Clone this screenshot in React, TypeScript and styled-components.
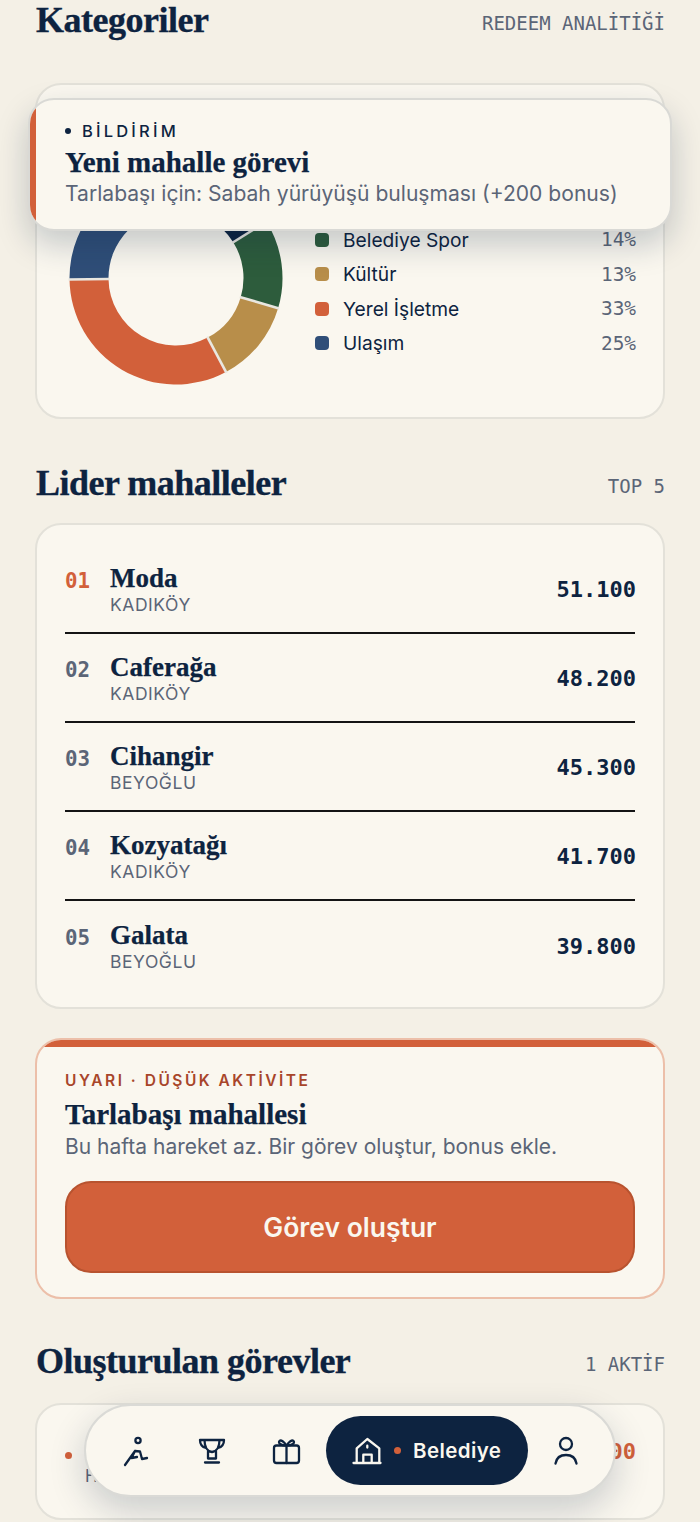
import React from "react";
import styled, { createGlobalStyle } from "styled-components";

const NAVY = "#0d2340";
const ORANGE = "#d2603a";
const MUTED = "#5b6577";
const CARD = "#faf7ef";
const SANS = `"Inter", "Liberation Sans", sans-serif`;
const SERIF = `"Liberation Serif", "DejaVu Serif", serif`;
const MONO = `"DejaVu Sans Mono", "Liberation Mono", monospace`;

const Global = createGlobalStyle`
  html, body { margin: 0; padding: 0; background: #f4f0e6; }
  * { box-sizing: border-box; }
  body { font-family: ${SANS}; color: ${NAVY}; -webkit-font-smoothing: antialiased; }
`;

const Page = styled.div`
  position: relative;
  width: 700px;
  height: 1522px;
  overflow: hidden;
  padding: 0 35px;
  background: #f4f0e6;
`;

const SectionHead = styled.header<{ $gap: number; $top: number }>`
  display: flex;
  align-items: center;
  justify-content: space-between;
  height: 40px;
  margin-top: ${(p) => p.$top}px;
  margin-bottom: ${(p) => p.$gap}px;
`;

const Heading = styled.h2`
  margin: 0 0 0 1px;
  font-family: ${SERIF};
  font-size: 36px;
  font-weight: 700;
  letter-spacing: -0.5px;
  line-height: 40px;
  color: ${NAVY};
  -webkit-text-stroke: 0.35px ${NAVY};
`;

const HeadMeta = styled.span`
  font-family: ${MONO};
  font-size: 19px;
  color: ${MUTED};
  margin-top: 6px;
`;

const Card = styled.section`
  background: ${CARD};
  border: 2px solid #e3e1d9;
  border-radius: 26px;
`;

const ChartCard = styled(Card)`
  height: 336px;
  padding: 54px 27px 0 28px;
  display: flex;
  gap: 28px;
  align-items: center;
`;

const Donut = styled.svg`
  width: 222px;
  height: 222px;
  flex: none;
`;

const Legend = styled.ul`
  flex: 1;
  list-style: none;
  margin: 27px 0 0;
  padding: 0;
  display: flex;
  flex-direction: column;
`;

const LegendRow = styled.li`
  display: flex;
  align-items: center;
  height: 34.6px;
  font-size: 19.2px;
  color: ${NAVY};
`;

const Swatch = styled.i<{ $c: string }>`
  width: 14px;
  height: 14px;
  border-radius: 4px;
  background: ${(p) => p.$c};
  margin-right: 14px;
  flex: none;
`;

const LegendLabel = styled.span`
  flex: 1;
`;

const Percent = styled.span`
  font-family: ${MONO};
  font-size: 19.4px;
  color: ${MUTED};
`;

const LeaderCard = styled(Card)`
  padding: 20px 28px 17px;
`;

const LeaderRow = styled.div<{ $last?: boolean }>`
  display: flex;
  align-items: center;
  height: 89px;
  padding-top: 1px;
  border-bottom: ${(p) => (p.$last ? "none" : "2px solid #141414")};
`;

const Rank = styled.span<{ $hot?: boolean }>`
  width: 45px;
  flex: none;
  font-family: ${MONO};
  font-size: 20.8px;
  font-weight: 700;
  color: ${(p) => (p.$hot ? ORANGE : MUTED)};
  margin-bottom: 17px;
`;

const PlaceCol = styled.div`
  flex: 1;
  display: flex;
  flex-direction: column;
`;

const PlaceName = styled.span`
  font-family: ${SERIF};
  font-size: 27px;
  font-weight: 700;
  line-height: 30px;
  color: ${NAVY};
  -webkit-text-stroke: 0.25px ${NAVY};
`;

const PlaceSub = styled.span`
  font-size: 17.5px;
  line-height: 23px;
  letter-spacing: 0.55px;
  color: ${MUTED};
`;

const Score = styled.span<{ $hot?: boolean }>`
  font-family: ${MONO};
  font-size: 22px;
  font-weight: 700;
  margin-right: -1px;
  color: ${(p) => (p.$hot ? ORANGE : NAVY)};
`;

const AlertCard = styled.section`
  margin-top: 29px;
  height: 261px;
  background: ${CARD};
  border: 2px solid #ecbfa9;
  border-radius: 26px;
  overflow: hidden;
  display: flex;
  flex-direction: column;
`;

const AlertBar = styled.div`
  height: 7px;
  flex: none;
  background: ${ORANGE};
`;

const AlertBody = styled.div`
  padding: 24px 28px 0;
  display: flex;
  flex-direction: column;
`;

const AlertLabel = styled.div`
  font-size: 15.5px;
  font-weight: 600;
  letter-spacing: 2.5px;
  line-height: 20px;
  color: #a8452a;
`;

const AlertTitle = styled.div`
  font-family: ${SERIF};
  font-size: 29px;
  font-weight: 700;
  line-height: 32px;
  margin-top: 7px;
  color: ${NAVY};
  -webkit-text-stroke: 0.25px ${NAVY};
`;

const AlertText = styled.div`
  font-size: 21px;
  line-height: 26px;
  margin-top: 4px;
  color: ${MUTED};
`;

const ActionButton = styled.button`
  margin-top: 21px;
  height: 92px;
  border: 2px solid #b8532f;
  border-radius: 26px;
  background: ${ORANGE};
  color: ${CARD};
  font-family: ${SANS};
  font-size: 26.5px;
  font-weight: 600;
`;

const TaskCard = styled(Card)`
  height: 117px;
  padding: 0 28px;
  display: flex;
  align-items: flex-start;
`;

const TaskDot = styled.i`
  width: 7px;
  height: 7px;
  border-radius: 50%;
  background: ${ORANGE};
  margin-top: 47px;
  flex: none;
`;

const TaskCol = styled.div`
  flex: 1;
  margin-left: 13px;
  padding-top: 31px;
  display: flex;
  flex-direction: column;
`;

const TaskTitle = styled.span`
  font-family: ${SERIF};
  font-size: 24px;
  font-weight: 700;
  line-height: 28px;
  padding-left: 6px;
`;

const TaskSub = styled.span`
  font-size: 17px;
  line-height: 24px;
  color: ${MUTED};
`;

const TaskScore = styled(Score)`
  margin-top: 34px;
`;

const Toast = styled.aside`
  position: absolute;
  left: 28px;
  top: 98px;
  width: 644px;
  height: 133px;
  background: ${CARD};
  border: 2px solid #d9d9d5;
  border-radius: 26px;
  overflow: hidden;
  padding: 21px 0 0 35px;
  box-shadow: 0 14px 32px rgba(13, 35, 64, 0.22);
  &::before {
    content: "";
    position: absolute;
    left: -2px;
    top: -2px;
    bottom: -2px;
    width: 8px;
    background: ${ORANGE};
  }
`;

const ToastLabel = styled.div`
  display: flex;
  align-items: center;
  gap: 11px;
  font-size: 16.5px;
  font-weight: 500;
  letter-spacing: 3.2px;
  line-height: 20px;
  color: ${NAVY};
  &::before {
    content: "";
    width: 6px;
    height: 6px;
    border-radius: 50%;
    background: ${NAVY};
  }
`;

const ToastTitle = styled.div`
  font-family: ${SERIF};
  font-size: 29px;
  font-weight: 700;
  line-height: 32px;
  margin-top: 5px;
  color: ${NAVY};
  -webkit-text-stroke: 0.25px ${NAVY};
`;

const ToastText = styled.div`
  font-size: 21.1px;
  line-height: 26px;
  margin-top: 3px;
  color: ${MUTED};
`;

const Nav = styled.nav`
  position: absolute;
  left: 84px;
  top: 1404px;
  width: 532px;
  height: 93px;
  padding: 0 10px 0 12px;
  background: ${CARD};
  border: 2px solid #dadad6;
  border-radius: 47px;
  display: flex;
  align-items: center;
  box-shadow: 0 14px 36px rgba(13, 35, 64, 0.2);
`;

const NavItem = styled.div<{ $w: number }>`
  width: ${(p) => p.$w}px;
  flex: none;
  display: flex;
  align-items: center;
  justify-content: center;
  color: ${NAVY};
`;

const ActivePill = styled.div`
  width: 202px;
  height: 69px;
  margin-left: 2px;
  flex: none;
  border-radius: 35px;
  background: ${NAVY};
  color: ${CARD};
  display: flex;
  align-items: center;
  padding-left: 26px;
  font-size: 20.5px;
  font-weight: 600;
  letter-spacing: 0.4px;
`;

const PillDot = styled.i`
  width: 7px;
  height: 7px;
  border-radius: 50%;
  background: ${ORANGE};
  margin: 0 12px;
  flex: none;
`;

const Ico = styled.svg`
  display: block;
  fill: none;
  stroke: currentColor;
  stroke-width: 2.3;
  stroke-linecap: round;
  stroke-linejoin: round;
`;

const CX = 111;
const polar = (r: number, a: number) => {
  const t = ((a - 90) * Math.PI) / 180;
  return [CX + r * Math.cos(t), CX + r * Math.sin(t)];
};

const R_OUT = 106.5;
const R_IN = 67.5;

const slice = (from: number, to: number) => {
  const [x1, y1] = polar(R_OUT, from);
  const [x2, y2] = polar(R_OUT, to);
  const [x3, y3] = polar(R_IN, to);
  const [x4, y4] = polar(R_IN, from);
  const large = to - from > 180 ? 1 : 0;
  return `M${x1} ${y1}A${R_OUT} ${R_OUT} 0 ${large} 1 ${x2} ${y2}L${x3} ${y3}A${R_IN} ${R_IN} 0 ${large} 0 ${x4} ${y4}Z`;
};

const gapLine = (a: number) => {
  const [x1, y1] = polar(R_IN - 1, a);
  const [x2, y2] = polar(R_OUT + 1, a);
  return `M${x1} ${y1}L${x2} ${y2}`;
};

const segments = [
  { c: NAVY, from: 0, to: 58 },
  { c: "#2d5c3c", from: 58, to: 106.5 },
  { c: "#b88e4a", from: 106.5, to: 152 },
  { c: ORANGE, from: 152, to: 269.2 },
  { c: "#2f4e78", from: 269.2, to: 360 },
];

const legend = [
  { c: "#2d5c3c", label: "Belediye Spor", v: 14 },
  { c: "#b88e4a", label: "Kültür", v: 13 },
  { c: ORANGE, label: "Yerel İşletme", v: 33 },
  { c: "#2f4e78", label: "Ulaşım", v: 25 },
];

const leaders = [
  ["01", "Moda", "KADIKÖY", "51.100"],
  ["02", "Caferağa", "KADIKÖY", "48.200"],
  ["03", "Cihangir", "BEYOĞLU", "45.300"],
  ["04", "Kozyatağı", "KADIKÖY", "41.700"],
  ["05", "Galata", "BEYOĞLU", "39.800"],
];

export default function App() {
  return (
    <>
      <Global />
      <Page>
        <SectionHead $top={0} $gap={43}>
          <Heading>Kategoriler</Heading>
          <HeadMeta>REDEEM ANALİTİĞİ</HeadMeta>
        </SectionHead>
        <ChartCard>
          <Donut viewBox="0 0 222 222">
            {segments.map((s) => (
              <g key={s.c}>
                <path d={slice(s.from, s.to)} fill={s.c} />
                <path d={gapLine(s.from)} stroke="#e9e7e0" strokeWidth="2.6" />
              </g>
            ))}
          </Donut>
          <Legend>
            {legend.map((s) => (
              <LegendRow key={s.label}>
                <Swatch $c={s.c} />
                <LegendLabel>{s.label}</LegendLabel>
                <Percent>{s.v}%</Percent>
              </LegendRow>
            ))}
          </Legend>
        </ChartCard>

        <SectionHead $top={44} $gap={20}>
          <Heading>Lider mahalleler</Heading>
          <HeadMeta>TOP 5</HeadMeta>
        </SectionHead>
        <LeaderCard>
          {leaders.map((l, i) => (
            <LeaderRow key={l[0]} $last={i === leaders.length - 1}>
              <Rank $hot={i === 0}>{l[0]}</Rank>
              <PlaceCol>
                <PlaceName>{l[1]}</PlaceName>
                <PlaceSub>{l[2]}</PlaceSub>
              </PlaceCol>
              <Score>{l[3]}</Score>
            </LeaderRow>
          ))}
        </LeaderCard>

        <AlertCard>
          <AlertBar />
          <AlertBody>
            <AlertLabel>UYARI · DÜŞÜK AKTİVİTE</AlertLabel>
            <AlertTitle>Tarlabaşı mahallesi</AlertTitle>
            <AlertText>Bu hafta hareket az. Bir görev oluştur, bonus ekle.</AlertText>
            <ActionButton>Görev oluştur</ActionButton>
          </AlertBody>
        </AlertCard>

        <SectionHead $top={42} $gap={22}>
          <Heading>Oluşturulan görevler</Heading>
          <HeadMeta>1 AKTİF</HeadMeta>
        </SectionHead>
        <TaskCard>
          <TaskDot />
          <TaskCol>
            <TaskTitle>Sabah yürüyüşü</TaskTitle>
            <TaskSub>HEDEF: TARLABAŞI</TaskSub>
          </TaskCol>
          <TaskScore $hot>+200</TaskScore>
        </TaskCard>

        <Toast>
          <ToastLabel>BİLDİRİM</ToastLabel>
          <ToastTitle>Yeni mahalle görevi</ToastTitle>
          <ToastText>Tarlabaşı için: Sabah yürüyüşü buluşması (+200 bonus)</ToastText>
        </Toast>

        <Nav>
          <NavItem $w={76}>
            <Ico width="28" height="32" viewBox="0 0 28 32">
              <circle cx="16" cy="5.5" r="2.6" />
              <path d="M3 30L13 16L18 16.5L20 24L25 23M13 16L9.5 23L15 22" />
            </Ico>
          </NavItem>
          <NavItem $w={75}>
            <Ico width="28" height="28" viewBox="0 0 28 28">
              <path d="M2 3h24M6.5 3c0 7 3 11.5 7.5 12c4.5-.5 7.5-5 7.5-12M2 3c0 4 2 7 6 8M26 3c0 4-2 7-6 8M10 14.5v7h8v-7M7 25.5h14" />
            </Ico>
          </NavItem>
          <NavItem $w={75}>
            <Ico width="29" height="28" viewBox="0 0 29 28">
              <rect x="2" y="8.5" width="25" height="17.5" rx="2.5" />
              <path d="M14.5 8.5V26M14.5 8.5C12 4.5 9 2.5 7.5 4C6 5.5 8 8.5 14.5 8.5C21 8.5 23 5.5 21.5 4C20 2.5 17 4.5 14.5 8.5" />
            </Ico>
          </NavItem>
          <ActivePill>
            <Ico width="30" height="28" viewBox="0 0 30 28">
              <path d="M1.5 26h27M4.7 26V11.3L15.3 2L27.3 11.3V26M11.3 26v-8.3h8.4V26M15.3 8.7v1.8" />
            </Ico>
            <PillDot />
            Belediye
          </ActivePill>
          <NavItem $w={76}>
            <Ico width="26" height="30" viewBox="0 0 26 30">
              <circle cx="13" cy="8" r="6" />
              <path d="M2.5 27.5C3.5 21.5 8 19 13 19C18 19 22.5 21.5 23.5 27.5" />
            </Ico>
          </NavItem>
        </Nav>
      </Page>
    </>
  );
}
